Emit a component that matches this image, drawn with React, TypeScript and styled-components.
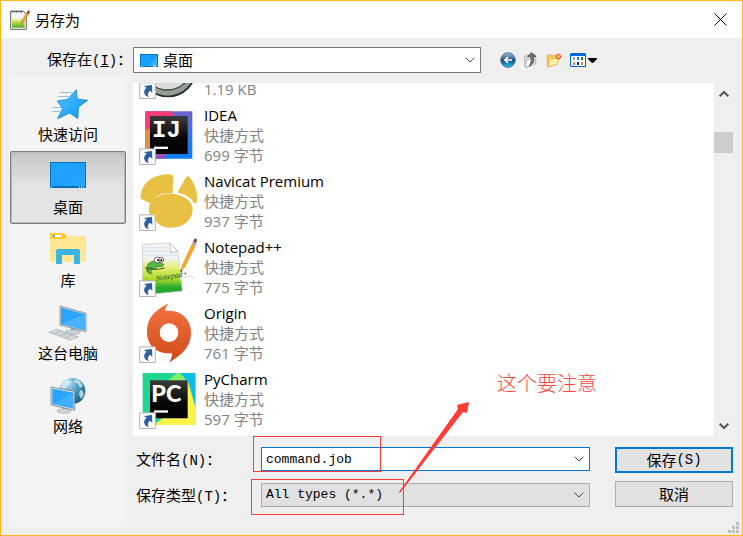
import React from "react";
import styled, { createGlobalStyle, css } from "styled-components";

const uiFont = `"Open Sans", "Noto Sans CJK SC", sans-serif`;
const formFont = `"Liberation Mono", "Noto Sans CJK SC", monospace`;

const GlobalStyle = createGlobalStyle`
  * { box-sizing: border-box; }
  body { margin: 0; background: #efefef; color: #000; }
  button, input, select { font: inherit; color: inherit; margin: 0; padding: 0; }
  svg { display: block; overflow: visible; flex: none; }
`;

const Dialog = styled.main`
  position: relative;
  display: flex;
  flex-direction: column;
  height: 100vh;
  min-height: 400px;
  overflow: hidden;
  border: 1px solid #fdb813;
  background: #efefef;
  font: 15px/20px ${uiFont};
`;

const TitleBar = styled.header`
  display: flex;
  align-items: center;
  gap: 5px;
  height: 37px;
  padding-left: 9px;
  background: #fff;
`;

const Title = styled.h1`
  flex: 1;
  margin: 0;
  font-size: 15px;
  font-weight: 400;
`;

const PlainButton = styled.button`
  display: flex;
  align-items: center;
  justify-content: center;
  border: 0;
  background: transparent;
`;

const CloseButton = styled(PlainButton)`
  width: 44px;
  height: 37px;
`;

const LookInRow = styled.div`
  display: flex;
  align-items: center;
  padding: 9px 9px 4px 8px;
`;

const LookInLabel = styled.label`
  width: 124px;
  padding-left: 38px;
`;

const Latin = styled.span`
  font: 14px/20px ${formFont};
`;

const comboTones = {
  normal: css`border-color: #7a7a7a; background: #fff;`,
  focus: css`border-color: #0078d7; background: #fff;`,
  muted: css`border-color: #adadad; background: #e1e1e1;`,
};

const Combo = styled.div<{ $tone: keyof typeof comboTones; $height: number }>`
  display: flex;
  align-items: center;
  flex: 1;
  min-width: 0;
  height: ${(p) => p.$height}px;
  padding: 0 5px 0 4px;
  border: 1px solid;
  ${(p) => comboTones[p.$tone]}
`;

const Select = styled.select<{ $mono?: boolean }>`
  flex: 1;
  min-width: 0;
  height: 22px;
  border: 0;
  outline: 0;
  appearance: none;
  background: transparent;
  ${(p) => p.$mono && css`font: 13px/20px ${formFont};`}
`;

const TextBox = styled.input`
  flex: 1;
  min-width: 0;
  height: 22px;
  border: 0;
  outline: 0;
  background: transparent;
  font: 13px/20px ${formFont};
`;

const ComboIcon = styled.span`
  padding: 0 5px 0 2px;
`;

const Toolbar = styled.div`
  display: flex;
  gap: 7px;
  width: 252px;
  padding-left: 19px;
`;

const Content = styled.div`
  display: grid;
  grid-template-columns: 118px minmax(0, 1fr);
  gap: 6px;
  flex: 1;
  min-height: 0;
  padding: 0 9px 8px 8px;
`;

const Sidebar = styled.nav`
  display: flex;
  flex-direction: column;
  padding: 1px;
  background: #f4f4f4;
`;

const Place = styled.button<{ $selected?: boolean }>`
  display: flex;
  flex-direction: column;
  align-items: center;
  gap: 4px;
  height: 73px;
  padding: 9px 0 0;
  border: 1px solid transparent;
  border-radius: 2px;
  background: transparent;
  ${(p) => p.$selected && css`
    border-color: #7d7d7d;
    background: linear-gradient(#c6c6c6, #e3e3e3 50%, #e5e5e5);
    box-shadow: inset 0 0 0 1px #b9b9b9;
  `}
`;

const Main = styled.section`
  display: flex;
  flex-direction: column;
  min-height: 0;
  padding-top: 6px;
`;

const Browser = styled.div`
  display: flex;
  flex: 1;
  min-height: 0;
`;

const FileList = styled.ul`
  display: flex;
  flex-direction: column;
  justify-content: flex-end;
  flex: 1;
  margin: 0;
  padding: 0 0 3px 6px;
  overflow: hidden;
  list-style: none;
  background: #fff;
`;

const FileItem = styled.li`
  display: flex;
  align-items: flex-end;
  gap: 7px;
  flex: none;
  height: 66px;
`;

const FileText = styled.div`
  padding-bottom: 4px;
  color: #838383;
`;

const FileName = styled.div`
  color: #000;
`;

const ScrollBar = styled.div`
  display: flex;
  flex-direction: column;
  width: 19px;
`;

const ScrollButton = styled(PlainButton)`
  height: 21px;
`;

const Track = styled.div`
  flex: 1;
  padding-top: 28px;
`;

const Thumb = styled.div`
  height: 21px;
  background: #cdcdcd;
`;

const Form = styled.form`
  position: relative;
  display: flex;
  gap: 25px;
  padding: 11px 0 20px;
`;

const Fields = styled.div`
  display: flex;
  flex-direction: column;
  gap: 12px;
  flex: 1;
  min-width: 0;
`;

const Field = styled.div`
  display: flex;
  align-items: center;
  height: 24px;
`;

const FieldLabel = styled.label`
  width: 128px;
  padding: 2px 0 0 3px;
`;

const Actions = styled.div`
  display: flex;
  flex-direction: column;
  justify-content: center;
  gap: 8px;
  width: 118px;
`;

const ActionButton = styled(PlainButton)<{ $primary?: boolean }>`
  height: 26px;
  border: ${(p) => (p.$primary ? "2px solid #0078d7" : "1px solid #adadad")};
  background: #e1e1e1;
`;

const Annotations = styled.div`
  position: absolute;
  inset: 0;
  pointer-events: none;
`;

const RedBox = styled.div<{ $x: number; $y: number; $w: number }>`
  position: absolute;
  left: ${(p) => p.$x}px;
  top: ${(p) => p.$y}px;
  width: ${(p) => p.$w}px;
  height: 36px;
  border: 1px solid #ff3c38;
`;

const Arrow = styled.svg`
  position: absolute;
  left: 265px;
  top: -36px;
`;

const Note = styled.p`
  position: absolute;
  left: 364px;
  top: -65px;
  margin: 0;
  color: #ff4540;
  font: 300 20px/24px "Noto Sans CJK SC", sans-serif;
`;

const Grip = styled.svg`
  position: absolute;
  right: 3px;
  bottom: 2px;
`;

const Chevron = ({ up, bold }: { up?: boolean; bold?: boolean }) => (
  <svg width="10" height="6" viewBox="0 0 10 6" fill="none" stroke={bold ? "#555" : "#444"} strokeWidth={bold ? 2 : 1}>
    <path d={up ? "M.7 5.3 5 1l4.3 4.3" : "M.7.7 5 5 9.3.7"} />
  </svg>
);

const AppIcon = () => (
  <svg width="20" height="20" viewBox="30 27 60 60">
    <defs>
      <linearGradient id="page" x2="0" y2="1">
        <stop offset=".35" stopColor="#f4f4ee" />
        <stop offset=".5" stopColor="#d9ea62" />
        <stop offset="1" stopColor="#4faa22" />
      </linearGradient>
    </defs>
    <path d="M32 31h38l9 8v46H32z" fill="#f5f5f5" stroke="#63665e" strokeWidth="3" />
    <path d="M36 38h38v42H36z" fill="url(#page)" />
    <path d="M36 28v7M43 28v7M50 28v7M57 28v7M64 28v7" stroke="#555" strokeWidth="3" />
    <path d="m62 72 3-13 17-26 6 4-17 26z" fill="#f0a526" stroke="#915e17" strokeWidth="1" />
    <path d="m80 35 5-7 5 3-4 8z" fill="#982335" />
  </svg>
);

const MiniDesktop = () => (
  <svg width="18" height="13" viewBox="0 0 18 13">
    <rect x=".5" y=".5" width="17" height="12" fill="#16a0ff" stroke="#0872b9" />
    <path d="M8 12 17 3v9z" fill="#3bafff" />
    <path d="M1 12h1M13 12h3" stroke="#fff" />
  </svg>
);

const BackIcon = () => (
  <svg width="16" height="16" viewBox="0 0 16 16">
    <defs>
      <linearGradient id="orb" x2="0" y2="1">
        <stop stopColor="#a6bed2" /><stop offset=".45" stopColor="#315f92" />
        <stop offset=".55" stopColor="#12538c" /><stop offset="1" stopColor="#29c3ec" />
      </linearGradient>
    </defs>
    <circle cx="8" cy="8" r="7.4" fill="url(#orb)" stroke="#55718d" strokeWidth=".8" />
    <path d="M12 8H5M8 5 5 8l3 3" stroke="#fff" strokeWidth="1.7" fill="none" />
  </svg>
);

const UpIcon = () => (
  <svg width="16" height="16" viewBox="0 0 16 16">
    <path d="M1.500 4.500 5 3l1 1 6-1.500 1 9-9 4-2-1z" fill="#dedede" stroke="#a6a6a6" strokeWidth=".8" />
    <path d="m4 7.500 9-2-1.500 7.500-9 2.500z" fill="#f6f6f6" stroke="#b5b5b5" strokeWidth=".8" />
    <path d="M4.500 4.500 8.500.5l4.500 4h-2.500c.8 4.500 0 8-4.500 9.500C8.500 11 8.500 8 7.500 4.500z" fill="#737373" stroke="#4d4d4d" strokeWidth=".8" />
  </svg>
);

const NewFolderIcon = () => (
  <svg width="16" height="16" viewBox="0 0 16 16">
    <path d="M1 3.500 5 2.500l1.500 1.500 5-1v9L1.500 15z" fill="#f2ce62" stroke="#d3a338" strokeWidth=".8" />
    <path d="m4 7.500 9.500-2L11 12.500l-9.500 2.500z" fill="#fff0a8" stroke="#dfb64d" strokeWidth=".8" />
    <path d="M12.500 1.500v6M9.500 4.500h6M10.500 2.500l4 4M14.500 2.500l-4 4" stroke="#f45a29" strokeWidth="1.300" />
    <circle cx="12.500" cy="4.500" r="1.500" fill="#ffd45a" />
  </svg>
);

const ViewIcon = () => (
  <svg width="29" height="16" viewBox="0 0 29 16">
    <path d="M2 1h14l1 1v13H2L1 14V2z" fill="#0067d8" />
    <path d="M2 4h14v10H2z" fill="#fff" />
    <path d="M4 5h2v3H4z" fill="#b49ab0" /><path d="M8 5h2v3H8z" fill="#0e88ea" /><path d="M12 5h2v3h-2z" fill="#168b20" />
    <path d="M4 10h2v3H4z" fill="#f07a55" /><path d="M8 10h2v3H8z" fill="#10209b" /><path d="M12 10h2v3h-2z" fill="#d69b13" />
    <path d="M19 6h9v1l-4 4h-1l-4-4z" />
  </svg>
);

const StarIcon = () => (
  <svg width="40" height="32" viewBox="0 0 40 32">
    <defs>
      <linearGradient id="star" x2="1" y2="1"><stop stopColor="#56c4ff" /><stop offset="1" stopColor="#0796f4" /></linearGradient>
    </defs>
    <path d="M12 4.500h12M10 8.500h11M5 19.500h9M4 23.500h8" stroke="#8bc6ea" />
    <path d="m28.300 1.700.9 9.300 10.500 1.300-9.200 6.700-.7 11.500-8.300-5.500-11.800 5.700 4.800-10.200L9.300 13l10.200-1.500z" fill="url(#star)" stroke="#0b78bd" strokeWidth=".7" />
  </svg>
);

const DesktopIcon = () => (
  <svg width="40" height="32" viewBox="1 0 40 32">
    <defs>
      <linearGradient id="wall" x2="1" y2="1"><stop stopColor="#0f97fc" /><stop offset="1" stopColor="#2aa8ff" /></linearGradient>
    </defs>
    <rect x="3.500" y="1.500" width="35" height="25" fill="#1da3ff" stroke="#0870b5" />
    <path d="M10 25 28 2h10v23z" fill="url(#wall)" />
    <path d="M4 26h34" stroke="#0870b5" strokeWidth="2" /><path d="M4 26h1M32 26h1M34 26h1M36 26h1" stroke="#fff" />
  </svg>
);

const LibraryIcon = () => (
  <svg width="40" height="32" viewBox="0 0 40 32">
    <path d="M2 2h35q1 0 1 1v24q0 1-1 1H3q-1 0-1-1z" fill="#ffe794" />
    <path d="M2 0q0-1 1-1h13l3 3-3 3H2z" fill="#fdca3b" />
    <path d="M5 1h2v2H5z" fill="#35b1e7" /><path d="M7 1h6v2H7z" fill="#fff" />
    <path d="M8 30V17q0-2 2-2h20q2 0 2 2v13h-6v-9H14v9z" fill="#3bb4e6" />
  </svg>
);

const ComputerIcon = () => (
  <svg width="40" height="32" viewBox="0 0 40 32">
    <path d="m23 20 5 2v3l-5-1z" fill="#9daab1" />
    <ellipse cx="25" cy="25" rx="7.500" ry="2.500" fill="#cbd3d7" stroke="#929da3" strokeWidth=".5" />
    <path d="m12-1 26 7.300v18.400L12 18z" fill="#d7dddf" stroke="#68767e" strokeWidth=".7" />
    <path d="m13 .6 24 6.700v16L13 17z" fill="#28a4fa" /><path d="m13 17 24-9.700v16z" fill="#4ab2ff" />
    <path d="m1.300 25.300 7.400-3 21.600 7.700-8.300 3z" fill="#dfe4e7" stroke="#9aa4aa" strokeWidth=".7" />
    <path d="m5 25 18 6M8 24l18 6M6 27l8-3M11 29l8-3M17 31l7-3" stroke="#a8b1b6" strokeWidth=".6" />
  </svg>
);

const NetworkIcon = () => (
  <svg width="40" height="32" viewBox="0 0 40 32">
    <defs>
      <radialGradient id="globe" cx=".3" cy=".2" r=".85">
        <stop stopColor="#c8ecf8" /><stop offset=".5" stopColor="#4e9ec0" /><stop offset="1" stopColor="#155e87" />
      </radialGradient>
    </defs>
    <circle cx="24.300" cy="11" r="13" fill="url(#globe)" />
    <path d="m13 4 5-4 5 1-1 3-3 1-2 4-4-1zm14-5 5 2 3 5-3 2-2-4-4-2zm5 11 3 1 1 4-3 4-2-4z" fill="#d7eff5" opacity=".75" />
    <path d="m14 27 5 1v3l-5-1z" fill="#a0abb0" />
    <ellipse cx="16" cy="31" rx="7" ry="2.300" fill="#cbd3d7" stroke="#949fa5" strokeWidth=".5" />
    <path d="m3 7 23.700 4.300v19L3 25z" fill="#dfe5e8" stroke="#68767e" strokeWidth=".7" />
    <path d="m4.300 8.700 21 3.800v16l-21-4.500z" fill="#28a4fa" /><path d="m4.300 24 21-11.500v16z" fill="#42afff" />
  </svg>
);

/* Shortcut icons share a 3:1 drawing grid; the arrow badge sits in the lower left corner. */
const Shortcut = ({ children }: { children: React.ReactNode }) => (
  <svg width="58" height="66" viewBox="0 0 174 198">
    {children}
    <path d="M2 137.500h47v47H2z" fill="#f9f9f9" stroke="#b5b5b5" strokeWidth="3" />
    <path d="m15 147 24-3 1 23-7-6c-8 7-8 12-3 19-15-3-20-19-7-28z" fill="#2c5f9e" />
  </svg>
);

const DiscArt = () => (
  <>
    <circle cx="87" cy="95" r="86" fill="#272b29" />
    <circle cx="85" cy="92" r="84" fill="#929f95" />
    <circle cx="85" cy="85" r="76" fill="#3c423f" />
    <circle cx="85" cy="83" r="74" fill="#dcdcdc" />
  </>
);

const IdeaArt = () => (
  <>
    <defs>
      <linearGradient id="ideaBlack" x2="0" y2="1"><stop stopColor="#3b3b3b" /><stop offset=".6" stopColor="#050505" /></linearGradient>
      <linearGradient id="ideaBlue" x2="0" y2="1"><stop stopColor="#6c65c9" /><stop offset="1" stopColor="#087fff" /></linearGradient>
    </defs>
    <path d="M19 25h141v142H19z" fill="url(#ideaBlue)" />
    <path d="M19 25h76l20 24-80 60H19z" fill="#fe3b78" />
    <path d="M19 79h20v62l-20 14z" fill="#df8f3d" />
    <path d="M50 150h35l-10 17H50z" fill="#9b55b5" />
    <path d="M33 39h113v114H33z" fill="url(#ideaBlack)" />
    <text x="39" y="103" fill="#fff" fontFamily="Liberation Mono, monospace" fontWeight="700" fontSize="72">IJ</text>
    <path d="M45 131h42v7H45z" fill="#fff" />
  </>
);

const NavicatArt = () => (
  <g fill="#e8c044">
    <path d="M9 91q-5 0-4-8C6 45 40 15 92 16q11 0 11 11l-2 43q0 4-6 4C75 70 50 77 39 99q-3 5-9 2z" />
    <path d="m117 67 23-41q6-9 13 0c17 23 23 46 21 71q-1 9-9 5c-9-15-23-25-44-30q-7-1-4-5z" />
    <path d="M30 122c-1-30 29-48 62-48 38 0 69 20 69 46 0 32-27 56-65 56-28 0-40-11-50-25Q31 142 30 122z" />
  </g>
);

const NotepadArt = () => (
  <>
    <defs>
      <linearGradient id="note" x2="0" y2="1">
        <stop offset=".3" stopColor="#f2f4f5" /><stop offset=".5" stopColor="#e4ef6a" />
        <stop offset=".72" stopColor="#a4d92c" /><stop offset=".88" stopColor="#22a92c" />
      </linearGradient>
    </defs>
    <path d="m10 28 82-4 24 24 14 120-80 8-39-10z" fill="url(#note)" stroke="#c4c4c4" strokeWidth="2" />
    <path d="m92 24 4 29 20-5z" fill="#fff" stroke="#aaa" strokeWidth="2" />
    <path d="M12 38h77M12 49h82M12 60h101" stroke="#cadbe8" strokeWidth="2" />
    <path d="M122 134q26-17 46-5" stroke="#ddd" strokeWidth="3" fill="none" />
    <path d="M40 117c-22-2-22-32-2-37 10-3 26 0 37 9l-7 6-15-1c2 9-14 13-16 4" fill="#56b645" stroke="#2f6f2c" strokeWidth="2" />
    <path d="M17 98q22 10 60 1M40 99c-14-6-23 10-9 16" stroke="#4d5324" strokeWidth="3" fill="none" />
    <circle cx="55" cy="75" r="9" fill="#fff" stroke="#222" strokeWidth="2" /><circle cx="67" cy="74" r="7" fill="#fff" stroke="#222" strokeWidth="2" />
    <circle cx="57" cy="76" r="3" /><circle cx="67" cy="75" r="3" />
    <text x="52" y="139" fill="#3e4a22" fontFamily="Liberation Serif, serif" fontSize="24" fontStyle="italic" transform="rotate(-10 52 139)">Notepad+</text>
    <path d="m124 111 6-21 32-69 10 5-34 70z" fill="#f6a62b" stroke="#c4851f" />
    <path d="m162 21 4-9q6-4 8 3l-3 11z" fill="#84424d" /><path d="m159 28 4-8 9 5-4 8z" fill="#a8b4c4" />
    <path d="m124 111 2-8 4 3z" fill="#333" />
  </>
);

const OriginArt = () => (
  <>
    <defs><linearGradient id="origin" x2="0" y2="1"><stop stopColor="#f47242" /><stop offset="1" stopColor="#cf4a19" /></linearGradient></defs>
    <path fill="url(#origin)" fillRule="evenodd" d="M89 7c-8 9-10 16-10 23 48-5 78 27 77 66-1 48-35 69-65 88 6-10 8-18 8-27-48 4-75-26-75-64 0-50 34-69 65-86zm1 60a28 28 0 1 0 0 56 28 28 0 0 0 0-56z" />
  </>
);

const PyCharmArt = () => (
  <>
    <defs>
      <linearGradient id="pyGreen" x2="1" y2="1"><stop stopColor="#20d889" /><stop offset="1" stopColor="#20ceb0" /></linearGradient>
      <linearGradient id="pyBlack" x2="0" y2="1"><stop stopColor="#3d3d3d" /><stop offset=".6" stopColor="#050505" /></linearGradient>
    </defs>
    <path d="M11 18h158v156H11z" fill="url(#pyGreen)" />
    <path d="M119 18h50v101l-30 20z" fill="#0bbde9" /><path d="m75 50 40-32h8l24 26z" fill="#83ee65" />
    <path d="m146 38 23 81v55H45l30-24z" fill="#fbf34b" />
    <path d="M33 40h113v114H33z" fill="url(#pyBlack)" />
    <text x="37" y="104" fill="#fff" fontFamily="Lato, sans-serif" fontWeight="900" fontSize="70">PC</text>
    <path d="M45 130h42v7H45z" fill="#fff" />
  </>
);

const places = [
  { label: "快速访问", Icon: StarIcon },
  { label: "桌面", Icon: DesktopIcon, selected: true },
  { label: "库", Icon: LibraryIcon },
  { label: "这台电脑", Icon: ComputerIcon },
  { label: "网络", Icon: NetworkIcon },
];

const files = [
  { size: "1.19 KB", Art: DiscArt },
  { name: "IDEA", size: "699 字节", Art: IdeaArt },
  { name: "Navicat Premium", size: "937 字节", Art: NavicatArt },
  { name: "Notepad++", size: "775 字节", Art: NotepadArt },
  { name: "Origin", size: "761 字节", Art: OriginArt },
  { name: "PyCharm", size: "597 字节", Art: PyCharmArt },
];

const tools = [
  { label: "后退", Icon: BackIcon },
  { label: "向上一级", Icon: UpIcon },
  { label: "新建文件夹", Icon: NewFolderIcon },
  { label: "查看", Icon: ViewIcon },
];

export default function App() {
  return (
    <>
      <GlobalStyle />
      <Dialog>
        <TitleBar>
          <AppIcon />
          <Title>另存为</Title>
          <CloseButton aria-label="关闭">
            <svg width="13" height="13" viewBox="0 0 13 13" stroke="#000">
              <path d="m.5.5 12 12M12.500.5l-12 12" />
            </svg>
          </CloseButton>
        </TitleBar>

        <LookInRow>
          <LookInLabel htmlFor="folder">保存在<Latin>(<u>I</u>)</Latin>：</LookInLabel>
          <Combo $tone="normal" $height={26}>
            <ComboIcon><MiniDesktop /></ComboIcon>
            <Select id="folder"><option>桌面</option></Select>
            <Chevron />
          </Combo>
          <Toolbar>
            {tools.map(({ label, Icon }) => (
              <PlainButton key={label} type="button" aria-label={label}><Icon /></PlainButton>
            ))}
          </Toolbar>
        </LookInRow>

        <Content>
          <Sidebar>
            {places.map(({ label, Icon, selected }) => (
              <Place key={label} $selected={selected} aria-pressed={!!selected}>
                <Icon />
                {label}
              </Place>
            ))}
          </Sidebar>

          <Main>
            <Browser>
              <FileList>
                {files.map(({ name, size, Art }) => (
                  <FileItem key={size}>
                    <Shortcut><Art /></Shortcut>
                    <FileText>
                      {name && <><FileName>{name}</FileName><div>快捷方式</div></>}
                      <div>{size}</div>
                    </FileText>
                  </FileItem>
                ))}
              </FileList>
              <ScrollBar>
                <ScrollButton aria-label="向上滚动"><Chevron up bold /></ScrollButton>
                <Track><Thumb /></Track>
                <ScrollButton aria-label="向下滚动"><Chevron bold /></ScrollButton>
              </ScrollBar>
            </Browser>

            <Form onSubmit={(e) => e.preventDefault()}>
              <Fields>
                <Field>
                  <FieldLabel htmlFor="filename">文件名<Latin>(N)</Latin>：</FieldLabel>
                  <Combo $tone="focus" $height={24}>
                    <TextBox id="filename" defaultValue="command.job" />
                    <Chevron />
                  </Combo>
                </Field>
                <Field>
                  <FieldLabel htmlFor="filetype">保存类型<Latin>(T)</Latin>：</FieldLabel>
                  <Combo $tone="muted" $height={24}>
                    <Select id="filetype" $mono><option>All types (*.*)</option></Select>
                    <Chevron />
                  </Combo>
                </Field>
              </Fields>
              <Actions>
                <ActionButton type="submit" $primary>保存<Latin>(S)</Latin></ActionButton>
                <ActionButton type="button">取消</ActionButton>
              </Actions>
              <Annotations>
                <RedBox $x={120} $y={0} $w={128} />
                <RedBox $x={118} $y={43} $w={153} />
                <Arrow width="72" height="94" viewBox="0 0 72 94" fill="#ff3c38">
                  <path d="M1 92 60 9l-1-4L71 2l-2 11-4-1L2 93z" />
                </Arrow>
                <Note>这个要注意</Note>
              </Annotations>
            </Form>
          </Main>
        </Content>
        <Grip width="11" height="11" viewBox="0 0 11 11" fill="#bdbdbd">
          <path d="M8 0h3v3H8zM4 4h3v3H4zM8 4h3v3H8zM0 8h3v3H0zM4 8h3v3H4zM8 8h3v3H8z" />
        </Grip>
      </Dialog>
    </>
  );
}
